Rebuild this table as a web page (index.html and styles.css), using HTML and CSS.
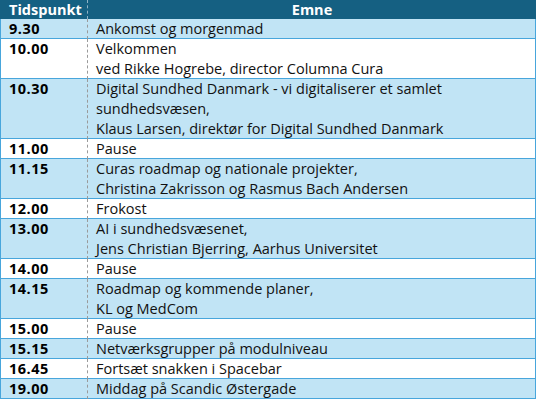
FILE: index.html
```html
<!DOCTYPE html>
<html lang="da">
<head>
<meta charset="utf-8">
<title>Program</title>
<link rel="stylesheet" href="styles.css">
</head>
<body>
<table class="agenda">
  <thead>
    <tr><th class="time">Tidspunkt</th><th class="topic">Emne</th></tr>
  </thead>
  <tbody>
    <tr class="alt"><td class="time">9.30</td><td class="topic">Ankomst og morgenmad</td></tr>
    <tr><td class="time">10.00</td><td class="topic">Velkommen<br>ved Rikke Hogrebe, director Columna Cura</td></tr>
    <tr class="alt"><td class="time">10.30</td><td class="topic">Digital Sundhed Danmark - vi digitaliserer et samlet<br>sundhedsvæsen,<br>Klaus Larsen, direktør for Digital Sundhed Danmark</td></tr>
    <tr><td class="time">11.00</td><td class="topic">Pause</td></tr>
    <tr class="alt"><td class="time">11.15</td><td class="topic">Curas roadmap og nationale projekter,<br>Christina Zakrisson og Rasmus Bach Andersen</td></tr>
    <tr><td class="time">12.00</td><td class="topic">Frokost</td></tr>
    <tr class="alt"><td class="time">13.00</td><td class="topic">AI i sundhedsvæsenet,<br>Jens Christian Bjerring, Aarhus Universitet</td></tr>
    <tr><td class="time">14.00</td><td class="topic">Pause</td></tr>
    <tr class="alt"><td class="time">14.15</td><td class="topic">Roadmap og kommende planer,<br>KL og MedCom</td></tr>
    <tr><td class="time">15.00</td><td class="topic">Pause</td></tr>
    <tr class="alt"><td class="time">15.15</td><td class="topic">Netværksgrupper på modulniveau</td></tr>
    <tr><td class="time">16.45</td><td class="topic">Fortsæt snakken i Spacebar</td></tr>
    <tr class="alt"><td class="time">19.00</td><td class="topic">Middag på Scandic Østergade</td></tr>
  </tbody>
</table>
</body>
</html>
```

FILE: styles.css
```css
html, body {
  margin: 0;
  padding: 0;
  background: #ffffff;
}

.agenda {
  border-collapse: separate;
  border-spacing: 0;
  width: 536px;
  font-family: "Open Sans", "Liberation Sans", sans-serif;
  font-size: 14.5px;
  color: #111111;
  table-layout: fixed;
}

.agenda th,
.agenda td {
  box-sizing: border-box;
  padding: 0 8px;
  line-height: 20px;
  vertical-align: top;
  text-align: left;
}

.agenda .time {
  width: 88px;
  padding-left: 9px;
}

.agenda thead th {
  background: #156082;
  color: #ffffff;
  font-weight: 700;
  height: 19px;
  line-height: 19px;
}

.agenda thead th.time {
  border-right: 1px dashed #8fb3c6;
}

.agenda thead th.topic {
  text-align: center;
}

.agenda td.time {
  font-weight: 700;
  letter-spacing: 0.5px;
  color: #000000;
  border-right: 1px dashed #9a9a9a;
}

.agenda tbody td {
  background: #ffffff;
  box-shadow: inset 0 -1px 0 #48a6dc;
}

.agenda tbody td.time {
  box-shadow: inset 0 -1px 0 #48a6dc, inset 1px 0 0 #48a6dc;
}

.agenda tbody td.topic {
  box-shadow: inset 0 -1px 0 #48a6dc, inset -1px 0 0 #48a6dc;
}

.agenda tbody tr.alt td {
  background: #c1e4f5;
}
```
